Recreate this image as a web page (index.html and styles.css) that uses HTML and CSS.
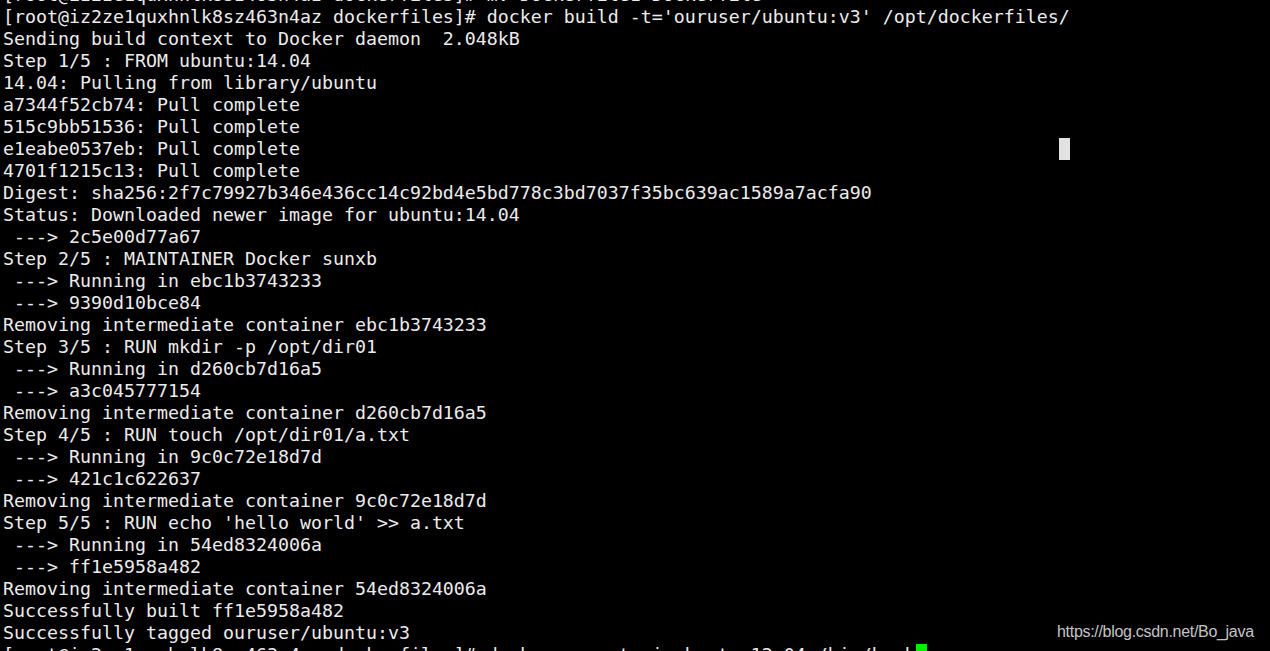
FILE: index.html
```html
<!DOCTYPE html>
<html>
<head>
<meta charset="utf-8">
<link rel="stylesheet" href="styles.css">
</head>
<body>
<div class="term">
<pre class="out">[root@iz2ze1quxhnlk8sz463n4az dockerfiles]# mv Dockerfile1 Dockerfile
[root@iz2ze1quxhnlk8sz463n4az dockerfiles]# docker build -t='ouruser/ubuntu:v3' /opt/dockerfiles/
Sending build context to Docker daemon  2.048kB
Step 1/5 : FROM ubuntu:14.04
14.04: Pulling from library/ubuntu
a7344f52cb74: Pull complete
515c9bb51536: Pull complete
e1eabe0537eb: Pull complete<span class="cursor-gap"></span><span class="cursor"></span>
4701f1215c13: Pull complete
Digest: sha256:2f7c79927b346e436cc14c92bd4e5bd778c3bd7037f35bc639ac1589a7acfa90
Status: Downloaded newer image for ubuntu:14.04
 ---&gt; 2c5e00d77a67
Step 2/5 : MAINTAINER Docker sunxb
 ---&gt; Running in ebc1b3743233
 ---&gt; 9390d10bce84
Removing intermediate container ebc1b3743233
Step 3/5 : RUN mkdir -p /opt/dir01
 ---&gt; Running in d260cb7d16a5
 ---&gt; a3c045777154
Removing intermediate container d260cb7d16a5
Step 4/5 : RUN touch /opt/dir01/a.txt
 ---&gt; Running in 9c0c72e18d7d
 ---&gt; 421c1c622637
Removing intermediate container 9c0c72e18d7d
Step 5/5 : RUN echo 'hello world' &gt;&gt; a.txt
 ---&gt; Running in 54ed8324006a
 ---&gt; ff1e5958a482
Removing intermediate container 54ed8324006a
Successfully built ff1e5958a482
Successfully tagged ouruser/ubuntu:v3
[root@iz2ze1quxhnlk8sz463n4az dockerfiles]# docker run -t -i ubuntu:12.04 /bin/bash<span class="prompt-cursor"></span></pre>
<div class="watermark">https://blog.csdn.net/Bo_java</div>
</div>
</body>
</html>
```
FILE: styles.css
```css
html, body {
  margin: 0;
  padding: 0;
  background: #000;
  overflow: hidden;
}
.term {
  position: relative;
  width: 1270px;
  height: 651px;
  overflow: hidden;
  background: #000;
}
.out {
  margin: -16px 0 0 3px;
  font-family: "DejaVu Sans Mono", monospace;
  font-size: 18.27px;
  line-height: 22px;
  color: #ececec;
  white-space: pre;
}
.cursor-gap {
  display: inline-block;
  width: 69ch;
}
.cursor {
  display: inline-block;
  width: 11px;
  height: 22px;
  vertical-align: top;
  background: #e2e2e2;
}
.prompt-cursor {
  display: inline-block;
  width: 11px;
  height: 22px;
  vertical-align: top;
  background: #00f000;
}
.watermark {
  position: absolute;
  left: 1057px;
  top: 621px;
  font-family: "Liberation Sans", Arial, sans-serif;
  font-size: 16px;
  line-height: 22px;
  color: #c4c4c4;
  letter-spacing: -0.3px;
}
```
